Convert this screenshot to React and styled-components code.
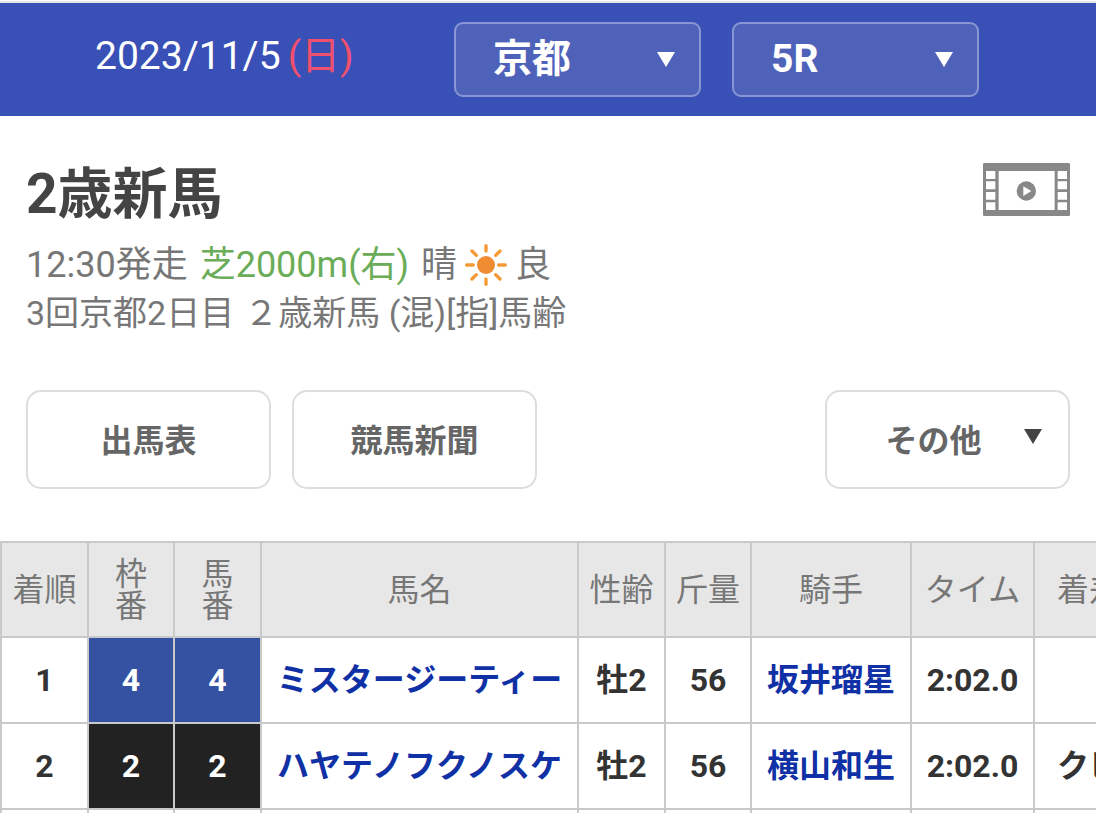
import React, { useState } from "react";
import styled, { createGlobalStyle } from "styled-components";

const GlobalStyle = createGlobalStyle`
  * {
    box-sizing: border-box;
  }
  body {
    margin: 0;
    background-color: #fff;
    color: #333;
    font-family: Roboto, "Noto Sans CJK JP", sans-serif;
    overflow-x: hidden;
  }
  button, select {
    font-family: inherit;
    cursor: pointer;
  }
`;

const PageWrapper = styled('div')`
  padding-top: 1px;
`;

const HeaderWrapper = styled('header')`
  display: flex;
  justify-content: space-between;
  align-items: center;
  height: 115px;
  padding: 0 117px 0 95px;
  border-top: 2px solid #e6e6e6;
  background-color: #3950b6;
`;

const DateWrapper = styled('div')`
  display: flex;
  gap: 7px;
  padding-bottom: 8px;
  color: #fff;
  font-size: 39px;
  line-height: 48px;
  white-space: nowrap;
`;

const SundayWrapper = styled('span')`
  color: #f0506e;
`;

const SelectsWrapper = styled('div')`
  display: flex;
  gap: 31px;
`;

const SelectLabel = styled('label')`
  position: relative;
  width: 247px;
`;

const SelectWrapper = styled('select')`
  display: block;
  width: 100%;
  height: 75px;
  padding: 0 60px 2px 37px;
  appearance: none;
  border: 2px solid #8996d3;
  border-radius: 9px;
  outline: unset;
  background-color: #4e62ba;
  color: #fff;
  font-size: 39px;
  font-weight: bold;
  option {
    color: #333;
  }
`;

const Arrow = styled('svg')`
  position: absolute;
  top: ${({$top}) => $top}px;
  right: 26px;
  width: 18px;
  height: 15px;
  fill: ${({$color}) => $color};
  pointer-events: none;
`;

const RaceWrapper = styled('section')`
  display: flex;
  justify-content: space-between;
  align-items: flex-start;
  padding: 47px 26px 0;
`;

const RaceTitle = styled('h1')`
  margin: 0 0 16px;
  color: #444;
  font-size: 55px;
  line-height: 62px;
`;

const RaceInfo = styled('p')`
  display: flex;
  align-items: center;
  gap: ${({$gap}) => $gap}px;
  margin: 0;
  color: #777;
  font-size: ${({$size}) => $size}px;
  line-height: 48px;
  white-space: nowrap;
`;

const CourseWrapper = styled('span')`
  color: #6aac58;
`;

const WeatherWrapper = styled('span')`
  display: flex;
  align-items: center;
  gap: 8px;
`;

const MovieButton = styled('button')`
  display: block;
  padding: 0;
  border: unset;
  background: none;
  svg {
    display: block;
    width: 87px;
    height: 53px;
  }
`;

const MenuWrapper = styled('nav')`
  display: flex;
  gap: 21px;
  padding: 53px 26px 52px;
`;

const MenuButton = styled('button')`
  position: relative;
  width: 245px;
  height: 99px;
  padding: 0 ${({$dropdown}) => $dropdown ? 28 : 0}px 4px 0;
  margin-left: ${({$dropdown}) => $dropdown ? 'auto' : 0};
  border: 2px solid #ddd;
  border-radius: 15px;
  background-color: #fff;
  color: #666;
  font-size: 32px;
  font-weight: bold;
`;

const TableWrapper = styled('div')`
  overflow-x: auto;
  scrollbar-width: none;
`;

const ResultTable = styled('table')`
  width: 1400px;
  table-layout: fixed;
  border-collapse: collapse;
  font-size: 32px;
  line-height: 32px;
  text-align: center;
  white-space: nowrap;
`;

const HeadCell = styled('th')`
  height: 95px;
  padding: 0;
  border: 2px solid #c9c9c9;
  background-color: #e7e7e7;
  color: #777;
  font-weight: normal;
`;

const Cell = styled('td')`
  height: 86px;
  padding: 0;
  border: 2px solid #c9c9c9;
  background-color: ${({$bg}) => $bg || '#fff'};
  color: ${({$bg}) => $bg ? '#fff' : '#333'};
  font-weight: bold;
`;

const CellLink = styled('a')`
  color: #1030a5;
  text-decoration: none;
`;

const FRAME_COLORS = {2: '#222', 4: '#3552a2'};

const COLUMNS = [
    {title: '着順', width: 87},
    {title: <>枠<br/>番</>, width: 86},
    {title: <>馬<br/>番</>, width: 87},
    {title: '馬名', width: 317},
    {title: '性齢', width: 87},
    {title: '斤量', width: 86},
    {title: '騎手', width: 160},
    {title: 'タイム', width: 123},
    {title: '着差', width: 110},
    {title: '', width: 257},
];

const RESULTS = [
    {rank: 1, frame: 4, number: 4, horse: 'ミスタージーティー', age: '牡2', weight: 56, jockey: '坂井瑠星', time: '2:02.0', margin: ''},
    {rank: 2, frame: 2, number: 2, horse: 'ハヤテノフクノスケ', age: '牡2', weight: 56, jockey: '横山和生', time: '2:02.0', margin: 'クビ'},
    {},
];

const DownArrow = ({top, color}) => (
    <Arrow $top={top} $color={color} viewBox="0 0 18 15" aria-hidden="true">
        <path d="M0 0H18L9 15Z"/>
    </Arrow>
);

const SunIcon = () => (
    <svg width="42" height="42" viewBox="0 0 126 126" role="img" aria-label="晴">
        <circle cx="63" cy="63" r="27" fill="#f08c32"/>
        <path
            d="M63 5V21M63 105V121M5 63H25M101 63H121M21 21L34 34M92 92L105 105M105 21L92 34M34 92L21 105"
            stroke="#f59a35"
            strokeWidth="10"
            strokeLinecap="round"
        />
    </svg>
);

const MovieIcon = () => (
    <svg viewBox="0 0 261 159" aria-hidden="true">
        <rect width="261" height="159" rx="4" fill="#888"/>
        <path
            d="M47 24H215V141H47ZM9 24H37V48H9ZM9 55H37V79H9ZM9 87H37V110H9ZM9 118H37V141H9ZM224 24H252V48H224ZM224 55H252V79H224ZM224 87H252V110H224ZM224 118H252V141H224Z"
            fill="#fff"
        />
        <circle cx="130" cy="84" r="29" fill="#888"/>
        <path d="M121 70V99L145 84Z" fill="#fff"/>
    </svg>
);

const Header = () => {
    const [place, setPlace] = useState('京都');
    const [race, setRace] = useState('5R');

    return (
        <HeaderWrapper>
            <DateWrapper>
                <span>2023/11/5</span>
                <SundayWrapper>(日)</SundayWrapper>
            </DateWrapper>
            <SelectsWrapper>
                <SelectLabel>
                    <SelectWrapper aria-label="競馬場" value={place} onChange={e => setPlace(e.target.value)}>
                        <option>京都</option>
                    </SelectWrapper>
                    <DownArrow top={30} color="#fff"/>
                </SelectLabel>
                <SelectLabel>
                    <SelectWrapper aria-label="レース" value={race} onChange={e => setRace(e.target.value)}>
                        <option>5R</option>
                    </SelectWrapper>
                    <DownArrow top={30} color="#fff"/>
                </SelectLabel>
            </SelectsWrapper>
        </HeaderWrapper>
    );
};

const Race = () => (
    <RaceWrapper>
        <div>
            <RaceTitle>2歳新馬</RaceTitle>
            <RaceInfo $size={36} $gap={12}>
                <span>12:30発走</span>
                <CourseWrapper>芝2000m(右)</CourseWrapper>
                <WeatherWrapper>晴<SunIcon/>良</WeatherWrapper>
            </RaceInfo>
            <RaceInfo $size={34} $gap={10}>
                <span>3回京都2日目</span>
                <span>２歳新馬 (混)[指]馬齢</span>
            </RaceInfo>
        </div>
        <MovieButton aria-label="レース映像">
            <MovieIcon/>
        </MovieButton>
    </RaceWrapper>
);

const Results = () => (
    <TableWrapper>
        <ResultTable>
            <colgroup>
                {COLUMNS.map((column, i) => <col key={i} width={column.width}/>)}
            </colgroup>
            <thead>
                <tr>
                    {COLUMNS.map((column, i) => <HeadCell key={i}>{column.title}</HeadCell>)}
                </tr>
            </thead>
            <tbody>
                {RESULTS.map((row, i) => (
                    <tr key={i}>
                        <Cell>{row.rank}</Cell>
                        <Cell $bg={FRAME_COLORS[row.frame]}>{row.frame}</Cell>
                        <Cell $bg={FRAME_COLORS[row.frame]}>{row.number}</Cell>
                        <Cell>{row.horse && <CellLink href="#horse">{row.horse}</CellLink>}</Cell>
                        <Cell>{row.age}</Cell>
                        <Cell>{row.weight}</Cell>
                        <Cell>{row.jockey && <CellLink href="#jockey">{row.jockey}</CellLink>}</Cell>
                        <Cell>{row.time}</Cell>
                        <Cell>{row.margin}</Cell>
                        <Cell/>
                    </tr>
                ))}
            </tbody>
        </ResultTable>
    </TableWrapper>
);

const App = () => (
    <PageWrapper>
        <GlobalStyle/>
        <Header/>
        <Race/>
        <MenuWrapper>
            <MenuButton>出馬表</MenuButton>
            <MenuButton>競馬新聞</MenuButton>
            <MenuButton $dropdown aria-haspopup="true">
                その他
                <DownArrow top={37} color="#444"/>
            </MenuButton>
        </MenuWrapper>
        <Results/>
    </PageWrapper>
);

export default App;
